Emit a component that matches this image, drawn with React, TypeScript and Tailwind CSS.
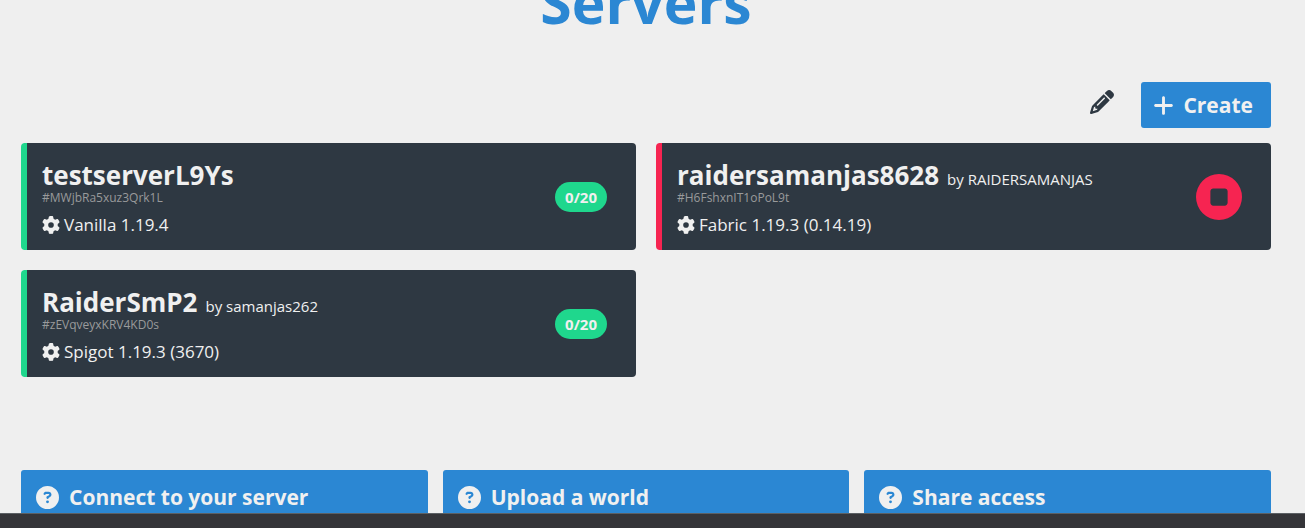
import {
  FaCircleQuestion,
  FaCircleStop,
  FaGear,
  FaPencil,
  FaPlus,
} from "react-icons/fa6";

type Server = {
  name: string;
  owner?: string;
  id: string;
  software: string;
  players?: string;
};

const servers: Server[] = [
  { name: "testserverL9Ys", id: "#MWjbRa5xuz3Qrk1L", software: "Vanilla 1.19.4", players: "0/20" },
  {
    name: "raidersamanjas8628",
    owner: "RAIDERSAMANJAS",
    id: "#H6FshxnIT1oPoL9t",
    software: "Fabric 1.19.3 (0.14.19)",
  },
  {
    name: "RaiderSmP2",
    owner: "samanjas262",
    id: "#zEVqveyxKRV4KD0s",
    software: "Spigot 1.19.3 (3670)",
    players: "0/20",
  },
];

const helpTopics = ["Connect to your server", "Upload a world", "Share access"];

function ServerCard({ server }: { server: Server }) {
  const online = server.players !== undefined;
  return (
    <a
      href="#server"
      className={`flex items-center justify-between rounded-[4px] border-l-6 bg-[#2e3842] py-[14px] pr-[29px] pl-[15px] ${
        online ? "border-[#1fd78d]" : "border-[#f62451]"
      }`}
    >
      <div className="flex min-w-0 flex-col pt-1">
        <div className="flex items-baseline gap-2 whitespace-nowrap">
          <span className="text-[26px] leading-7 font-bold">{server.name}</span>
          {server.owner && <span className="text-[15px] leading-4">by {server.owner}</span>}
        </div>
        <div className="text-[12px] leading-[18px] text-[#999a9b]">{server.id}</div>
        <div className="mt-[6px] flex items-center gap-1 text-[17px] leading-[23px]">
          <FaGear className="size-[18px]" />
          {server.software}
        </div>
      </div>
      {online ? (
        <span className="rounded-full bg-[#1fd78d] px-[10px] text-[15px] leading-[30px] font-bold">
          {server.players}
        </span>
      ) : (
        <FaCircleStop className="size-[46px] text-[#f62451]" />
      )}
    </a>
  );
}

export default function App() {
  return (
    <div className="flex h-screen flex-col overflow-hidden bg-[#efefef] font-['Open_Sans',sans-serif] text-[#f0f0f0]">
      <main className="min-h-0 flex-1 overflow-hidden pr-[34px] pl-[21px]">
        <h1 className="-mt-10 text-center text-[57px] leading-[84px] font-bold text-[#2b87d3]">
          Servers
        </h1>
        <div className="mt-[38px] flex items-center justify-end gap-[27px]">
          <button type="button" aria-label="Edit servers" className="pb-[6px] text-[#2e3842]">
            <FaPencil className="size-6" />
          </button>
          <button
            type="button"
            className="flex h-[46px] items-center gap-2 rounded-[3px] bg-[#2b87d3] pr-[18px] pl-[11px] text-[21px] font-bold"
          >
            <FaPlus className="size-[23px]" />
            <span className="pt-[2px]">Create</span>
          </button>
        </div>
        <div className="mt-[15px] grid grid-cols-2 gap-5">
          {servers.map((server) => (
            <ServerCard key={server.id} server={server} />
          ))}
        </div>
        <div className="mt-[93px] grid grid-cols-3 gap-[15px]">
          {helpTopics.map((topic) => (
            <a
              key={topic}
              href="#help"
              className="flex h-[54px] items-center gap-[10px] rounded-[3px] bg-[#2b87d3] px-[15px] text-[21px] font-bold"
            >
              <FaCircleQuestion className="size-[23px]" />
              <span className="pt-[2px]">{topic}</span>
            </a>
          ))}
        </div>
      </main>
      <footer className="h-[15px] shrink-0 border-t border-[#5c6064] bg-[#353539]" />
    </div>
  );
}
